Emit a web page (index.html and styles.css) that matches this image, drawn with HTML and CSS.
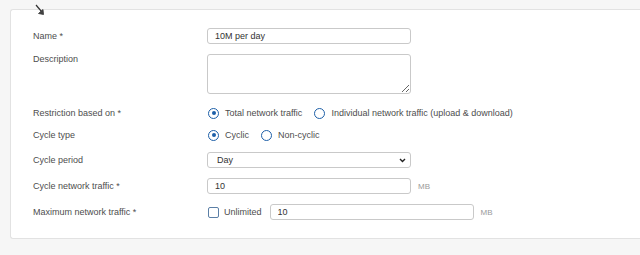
FILE: index.html
```html
<!DOCTYPE html>
<html lang="en">
<head>
  <meta charset="UTF-8">
  <title>Traffic quota</title>
  <link rel="stylesheet" href="styles.css">
</head>
<body>
<svg class="cursor" width="10" height="12" viewBox="0 0 10 12">
  <path d="M1 1 L6.5 7.5" fill="none" stroke="#333" stroke-width="1.2"/>
  <path d="M8.5 10.5 L3.5 9.5 L8 5.5 Z" fill="#444" stroke="#333" stroke-width="0.8"/>
</svg>
<div class="panel">
  <form class="quota-form">
    <div class="field">
      <label class="field-label">Name *</label>
      <input class="text-input" type="text" value="10M per day">
    </div>
    <div class="field field-top">
      <label class="field-label">Description</label>
      <textarea class="text-area"></textarea>
    </div>
    <div class="field field-radio first-radio">
      <label class="field-label">Restriction based on *</label>
      <div class="options">
        <span class="option"><span class="radio checked"></span>Total network traffic</span>
        <span class="option"><span class="radio"></span>Individual network traffic (upload &amp; download)</span>
      </div>
    </div>
    <div class="field field-radio">
      <label class="field-label">Cycle type</label>
      <div class="options">
        <span class="option"><span class="radio checked"></span>Cyclic</span>
        <span class="option"><span class="radio"></span>Non-cyclic</span>
      </div>
    </div>
    <div class="field field-select">
      <label class="field-label">Cycle period</label>
      <select class="select-input">
        <option>Day</option>
      </select>
    </div>
    <div class="field">
      <label class="field-label">Cycle network traffic *</label>
      <input class="text-input" type="text" value="10">
      <span class="unit">MB</span>
    </div>
    <div class="field">
      <label class="field-label">Maximum network traffic *</label>
      <span class="option"><span class="checkbox"></span>Unlimited</span>
      <input class="text-input" type="text" value="10">
      <span class="unit">MB</span>
    </div>
  </form>
</div>
</body>
</html>
```

FILE: styles.css
```css
:root {
  --page-bg: #f6f6f6;
  --panel-border: #e2e2e2;
  --label-color: #4d4d4d;
  --text-color: #333333;
  --input-border: #c9c9c9;
  --accent: #1d5fa8;
  --checkbox-border: #5b7fa6;
  --unit-color: #9a9a9a;
}

* {
  box-sizing: border-box;
  margin: 0;
  padding: 0;
}

body {
  font-family: 'Liberation Sans', Arial, sans-serif;
  font-size: 9px;
  background: var(--page-bg);
  color: var(--text-color);
  padding: 9px 0 0 10px;
  position: relative;
}

.cursor {
  position: absolute;
  left: 35px;
  top: 4px;
}

.panel {
  background: #fff;
  border: 1px solid var(--panel-border);
  border-right: none;
  border-radius: 3px 0 0 3px;
  padding: 18px 0 18px 22px;
}

.quota-form {
  display: flex;
  flex-direction: column;
  gap: 10px;
}

.field {
  display: flex;
  align-items: center;
  height: 16px;
}

.field-top {
  align-items: flex-start;
  height: 40px;
}

.field-radio {
  height: 12px;
}

.first-radio {
  margin-top: 3px;
}

.field-select {
  margin-top: 1px;
}

.field-label {
  width: 174px;
  flex-shrink: 0;
  color: var(--label-color);
}

.text-input,
.text-area,
.select-input {
  width: 204px;
  height: 16px;
  border: 1px solid var(--input-border);
  border-radius: 3px;
  font-family: inherit;
  font-size: 9px;
  color: var(--text-color);
  padding: 0 7px;
  background: #fff;
  outline: none;
}

.text-area {
  height: 40px;
  resize: vertical;
}

.select-input {
  padding: 0 9px;
  appearance: none;
  background-image: url("data:image/svg+xml,%3Csvg xmlns='http://www.w3.org/2000/svg' width='7' height='5'%3E%3Cpath d='M1 1 L3.5 3.5 L6 1' fill='none' stroke='%23222' stroke-width='1.4'/%3E%3C/svg%3E");
  background-repeat: no-repeat;
  background-position: right 4px center;
}

.unit {
  color: var(--unit-color);
  margin-left: 7px;
  font-size: 8px;
}

.options {
  display: flex;
  gap: 11px;
}

.option {
  display: flex;
  align-items: center;
  color: var(--label-color);
  white-space: nowrap;
}

.radio {
  width: 11px;
  height: 11px;
  border: 1.5px solid var(--accent);
  border-radius: 50%;
  margin: 0 6px 0 1px;
  display: flex;
  align-items: center;
  justify-content: center;
}

.radio.checked::after {
  content: "";
  width: 4px;
  height: 4px;
  border-radius: 50%;
  background: var(--accent);
}

.checkbox {
  width: 11px;
  height: 11px;
  border: 1.5px solid var(--checkbox-border);
  border-radius: 2px;
  margin: 0 5px 0 1px;
}

.field .option + .text-input {
  margin-left: 8px;
}
```
